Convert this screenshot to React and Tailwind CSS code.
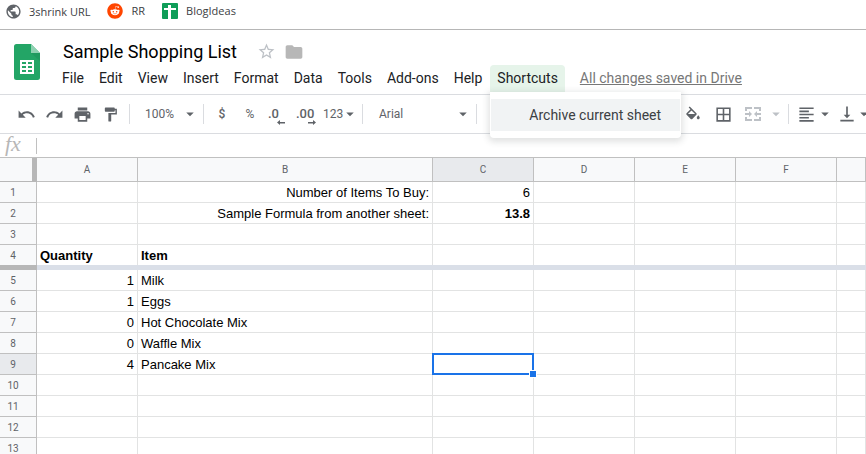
import { FaReddit } from 'react-icons/fa';
import {
  MdArrowDropDown,
  MdBorderAll,
  MdFolder,
  MdFormatAlignLeft,
  MdFormatPaint,
  MdPrint,
  MdPublic,
  MdRedo,
  MdStarBorder,
  MdUndo,
  MdVerticalAlignBottom,
} from 'react-icons/md';

const menus = ['File', 'Edit', 'View', 'Insert', 'Format', 'Data', 'Tools', 'Add-ons', 'Help'];
const columns = ['A', 'B', 'C', 'D', 'E', 'F', 'G'];
const frozenRows = [1, 2, 3, 4];
const scrollRows = [5, 6, 7, 8, 9, 10, 11, 12, 13];

const cells = {
  B1: { text: 'Number of Items To Buy:', right: true },
  C1: { text: '6', right: true },
  B2: { text: 'Sample Formula from another sheet:', right: true },
  C2: { text: '13.8', right: true, bold: true },
  A4: { text: 'Quantity', bold: true },
  B4: { text: 'Item', bold: true },
  A5: { text: '1', right: true },
  B5: { text: 'Milk' },
  A6: { text: '1', right: true },
  B6: { text: 'Eggs' },
  A7: { text: '0', right: true },
  B7: { text: 'Hot Chocolate Mix' },
  A8: { text: '0', right: true },
  B8: { text: 'Waffle Mix' },
  A9: { text: '4', right: true },
  B9: { text: 'Pancake Mix' },
};

function SheetFavicon() {
  return (
    <svg viewBox="0 0 16 16" className="size-4" aria-hidden="true">
      <rect width="16" height="16" rx="1" fill="#0f9d58" />
      <path d="M6 2h3v3h5v2H9v10H6V7H2V5h4z" fill="#fff" />
    </svg>
  );
}

function SheetsLogo() {
  return (
    <svg viewBox="0 0 26 36" className="h-9 w-[26px]" aria-hidden="true">
      <path d="M2.500 0H17l9 9v24.500a2.500 2.500 0 0 1-2.500 2.500h-21A2.500 2.500 0 0 1 0 33.500v-31A2.500 2.500 0 0 1 2.500 0z" fill="#23a566" />
      <path d="M17 0l9 9h-9z" fill="#8ed1b1" />
      <path d="M17 9h9v8z" fill="#1c8f57" opacity=".5" />
      <path d="M6 16h14v14H6zM8 18v2h4v-2zM14 18v2h4v-2zM8 22v2h4v-2zM14 22v2h4v-2zM8 26v2h4v-2zM14 26v2h4v-2z" fill="#fff" fillRule="evenodd" />
    </svg>
  );
}

function BucketIcon() {
  return (
    <svg viewBox="0 0 24 20" className="h-4 w-[18px]" fill="currentColor" aria-hidden="true">
      <path d="M16.560 8.940L7.620 0 6.210 1.410l2.380 2.380-5.150 5.150a1.490 1.490 0 0 0 0 2.120l5.500 5.500c.290.290.680.440 1.060.440s.770-.150 1.060-.440l5.500-5.500c.590-.580.590-1.530 0-2.120zM5.210 10L10 5.210 14.790 10H5.210zM19 11.500s-2 2.170-2 3.500c0 1.100.900 2 2 2s2-.900 2-2c0-1.330-2-3.500-2-3.500z" />
    </svg>
  );
}

function MergeIcon() {
  return (
    <svg viewBox="0 0 16 14" className="h-3.5 w-4 shrink-0" fill="currentColor" aria-hidden="true">
      <path d="M0 0h7v2H2v2H0zM9 0h7v4h-2V2H9zM0 10h2v2h5v2H0zM14 10h2v4H9v-2h5zM0 6h4V4l3 3-3 3V8H0zM16 6h-4V4L9 7l3 3V8h4z" />
    </svg>
  );
}

function DecimalArrow({ right }) {
  return (
    <svg viewBox="0 0 8 5" className="h-[5px] w-2" fill="currentColor" aria-hidden="true">
      {right ? <path d="M0 2h5V0l3 2.500L5 5V3.500H0z" /> : <path d="M8 2H3V0L0 2.500 3 5V3.500h5z" />}
    </svg>
  );
}

function Separator() {
  return <span className="h-5 w-px shrink-0 bg-[#dadce0]" />;
}

function ToolButton({ label, className = 'w-7 justify-center', children }) {
  return (
    <button type="button" aria-label={label} className={`flex h-7 shrink-0 items-center ${className}`}>
      {children}
    </button>
  );
}

function Toolbar() {
  return (
    <div className="flex h-[39px] shrink-0 items-center overflow-hidden border-b border-[#dadce0] pl-3 text-[#5f6368]">
      <ToolButton label="Undo"><MdUndo size={19} /></ToolButton>
      <ToolButton label="Redo"><MdRedo size={19} /></ToolButton>
      <ToolButton label="Print"><MdPrint size={19} /></ToolButton>
      <ToolButton label="Paint format"><MdFormatPaint size={17} /></ToolButton>
      <span className="w-[5px] shrink-0" />
      <Separator />
      <ToolButton className="w-[73px] justify-between pr-1 pl-[15px]">
        <span className="text-xs">100%</span>
        <MdArrowDropDown size={18} />
      </ToolButton>
      <Separator />
      <ToolButton className="w-9 justify-center text-xs font-medium">$</ToolButton>
      <ToolButton className="w-5 justify-center text-xs">%</ToolButton>
      <ToolButton label="Decrease decimal places" className="w-[33px] pl-2">
        <span className="flex flex-col items-end pt-1">
          <span className="pr-1.5 text-[13px] leading-3 font-medium">.0</span>
          <DecimalArrow />
        </span>
      </ToolButton>
      <ToolButton label="Increase decimal places" className="w-7 pl-[3px]">
        <span className="flex flex-col items-end pt-1">
          <span className="pr-0.5 text-[13px] leading-3 font-medium">.00</span>
          <DecimalArrow right />
        </span>
      </ToolButton>
      <ToolButton className="w-[41px] pl-0.5">
        <span className="text-xs">123</span>
        <MdArrowDropDown size={18} className="-ml-0.5" />
      </ToolButton>
      <Separator />
      <ToolButton className="w-[113px] justify-between pr-1 pl-4">
        <span className="text-xs">Arial</span>
        <MdArrowDropDown size={18} />
      </ToolButton>
      <Separator />
      <span className="w-[202px] shrink-0" />
      <ToolButton label="Fill color"><BucketIcon /></ToolButton>
      <ToolButton label="Borders" className="w-[34px] pl-[7px]"><MdBorderAll size={19} /></ToolButton>
      <ToolButton label="Merge cells" className="w-11 gap-1.5 pl-1 text-[#bdc1c6]">
        <MergeIcon />
        <MdArrowDropDown size={18} />
      </ToolButton>
      <span className="w-[3px] shrink-0" />
      <Separator />
      <ToolButton label="Horizontal align" className="w-12 pl-2">
        <MdFormatAlignLeft size={19} />
        <MdArrowDropDown size={18} />
      </ToolButton>
      <ToolButton label="Vertical align" className="w-9">
        <MdVerticalAlignBottom size={20} className="shrink-0" />
        <MdArrowDropDown size={18} className="-ml-0.5 shrink-0" />
      </ToolButton>
    </div>
  );
}

function Row({ row, frozenEdge }) {
  return (
    <tr className={frozenEdge ? 'h-5' : 'h-[21px]'}>
      <th
        scope="row"
        className={`border-r border-[#c0c0c0] pt-px pr-2.5 text-[10px] leading-4 font-normal text-[#5f6368] ${frozenEdge ? '' : 'border-b'} ${row === 9 ? 'bg-[#e8eaed]' : 'bg-[#f8f9fa]'}`}
      >
        {row}
      </th>
      {columns.map((col) => {
        const cell = cells[col + row] || {};
        const selected = col === 'C' && row === 9;
        return (
          <td
            key={col}
            className={`relative border-r border-[#e2e3e3] px-[3px] pt-0.5 font-['Liberation_Sans',Arial,sans-serif] text-[13px] leading-4 whitespace-nowrap text-black ${frozenEdge ? '' : 'border-b'} ${cell.right ? 'text-right' : 'text-left'} ${cell.bold ? 'font-bold' : ''}`}
          >
            {cell.text}
            {selected && (
              <span className="absolute -inset-px z-[1] border-2 border-[#1a73e8]">
                <span className="absolute -right-[5px] -bottom-[5px] box-content size-1.5 border border-white bg-[#1a73e8]" />
              </span>
            )}
          </td>
        );
      })}
    </tr>
  );
}

function Grid() {
  return (
    <table className="w-full shrink-0 table-fixed border-separate border-spacing-0">
      <colgroup>
        <col className="w-[37px]" />
        <col className="w-[101px]" />
        <col className="w-[295px]" />
        <col className="w-[101px]" />
        <col className="w-[101px]" />
        <col className="w-[101px]" />
        <col className="w-[101px]" />
        <col />
      </colgroup>
      <thead>
        <tr className="h-6">
          <td className="border-r-[5px] border-b border-[#b7b7b7] bg-[#f8f9fa]" />
          {columns.map((col) => (
            <th
              key={col}
              scope="col"
              className={`border-r border-b border-[#c0c0c0] text-[10px] leading-4 font-normal text-[#5f6368] ${col === 'C' ? 'bg-[#e8eaed]' : 'bg-[#f8f9fa]'}`}
            >
              {col === 'G' ? '' : col}
            </th>
          ))}
        </tr>
      </thead>
      <tbody>
        {frozenRows.map((row) => (
          <Row key={row} row={row} frozenEdge={row === 4} />
        ))}
        <tr className="h-[5px]" aria-hidden="true">
          <td className="bg-[#b7b7b7] p-0" />
          <td colSpan={7} className="bg-[#dadfe8] p-0" />
        </tr>
        {scrollRows.map((row) => (
          <Row key={row} row={row} />
        ))}
      </tbody>
    </table>
  );
}

export default function App() {
  return (
    <div className="flex h-screen flex-col overflow-hidden bg-white font-[Roboto,sans-serif]">
      <nav className="flex h-[30px] shrink-0 items-start gap-[17px] border-b border-[#b6b6b6] pt-[3px] pl-[5px] font-['Open_Sans','Noto_Sans',sans-serif] text-[11px] leading-4 text-[#3c4043]">
        <a href="#" className="flex items-center gap-[7px]">
          <MdPublic size={17} className="text-[#5f6368]" />
          3shrink URL
        </a>
        <a href="#" className="flex items-center gap-2">
          <FaReddit size={16} className="text-[#ff4500]" />
          RR
        </a>
        <a href="#" className="flex items-center gap-2">
          <SheetFavicon />
          BlogIdeas
        </a>
      </nav>

      <header className="flex h-[65px] shrink-0 border-b border-[#dadce0] pt-[9px] pl-3.5">
        <div className="pt-[5px]">
          <SheetsLogo />
        </div>
        <div className="flex flex-col pl-[15px]">
          <div className="mb-px flex h-[25px] items-center pl-2">
            <h1 className="text-lg leading-6 text-black">Sample Shopping List</h1>
            <button type="button" aria-label="Star" className="ml-5 text-[#bdc1c6]">
              <MdStarBorder size={19} />
            </button>
            <button type="button" aria-label="Move to folder" className="ml-2 text-[#b7b7b7]">
              <MdFolder size={20} />
            </button>
          </div>
          <div className="flex gap-px text-sm leading-[27px] whitespace-nowrap text-[#202124]">
            {menus.map((menu) => (
              <button key={menu} type="button" className="px-[7px]">
                {menu}
              </button>
            ))}
            <div className="relative">
              <button type="button" aria-expanded="true" className="rounded-t bg-[#e6f4ea] px-[7px]">
                Shortcuts
              </button>
              <div role="menu" className="absolute top-full left-0 z-10 w-[191px] rounded-b bg-white px-px py-[7px] shadow-[0_2px_6px_2px_rgba(60,64,67,0.15)]">
                <button type="button" role="menuitem" className="block w-full bg-[#f1f3f4] pl-[38px] text-left leading-8 text-[#3c4043]">
                  Archive current sheet
                </button>
              </div>
            </div>
            <a href="#" className="ml-3.5 text-[#777] underline">
              All changes saved in Drive
            </a>
          </div>
        </div>
      </header>

      <Toolbar />

      <div className="flex h-6 shrink-0 items-center border-b border-[#c0c0c0]">
        <label htmlFor="formula" className="w-9 pb-1 pl-[5px] font-['Liberation_Serif',serif] text-[22px] leading-5 text-[#b7b7b7] italic">
          fx
        </label>
        <input id="formula" type="text" className="h-4 flex-1 border-l border-[#c0c0c0] px-1 text-[13px] outline-none" />
      </div>

      <Grid />
    </div>
  );
}
